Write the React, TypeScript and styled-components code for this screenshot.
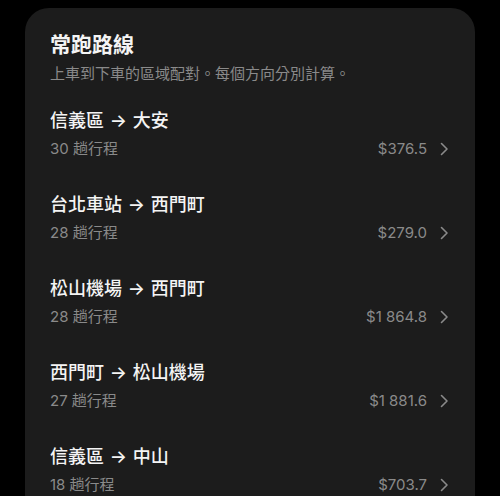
import React from "react";
import styled, { createGlobalStyle } from "styled-components";

const Global = createGlobalStyle`
  html, body { margin: 0; padding: 0; background: #000; }
  body {
    font-family: "Inter", "Noto Sans CJK TC", sans-serif;
    -webkit-font-smoothing: antialiased;
  }
`;

const Page = styled.div`
  width: 500px;
  height: 496px;
  overflow: hidden;
  background: #000;
  padding: 8px 25px 0;
  box-sizing: border-box;
`;

const Card = styled.section`
  background: #1c1c1c;
  border-radius: 24px;
  padding: 23px 26px 0 25px;
  min-height: 600px;
  box-sizing: border-box;
`;

const Title = styled.h2`
  margin: 0;
  font-size: 21px;
  line-height: 28px;
  font-weight: 600;
  color: #f4f4f4;
`;

const Subtitle = styled.p`
  margin: 4px 0 0;
  font-family: "Noto Sans CJK TC", sans-serif;
  font-size: 15px;
  line-height: 20px;
  color: #8a8a8a;
`;

const List = styled.ul`
  list-style: none;
  margin: 0;
  padding: 9px 0 0;
`;

const Row = styled.li`
  padding: 16px 0 17px;
  display: flex;
  flex-direction: column;
  gap: 5px;
`;

const RouteName = styled.div`
  font-size: 18px;
  line-height: 26px;
  font-weight: 500;
  color: #f4f4f4;
  word-spacing: 1px;
`;

const Meta = styled.div`
  display: flex;
  align-items: center;
  justify-content: space-between;
  font-size: 15px;
  line-height: 20px;
  color: #8a8a8a;
`;

const Right = styled.div`
  display: flex;
  align-items: center;
  gap: 13px;
`;

const Chevron = () => (
  <svg width="9" height="14" viewBox="0 0 9 14" fill="none">
    <path d="M1.5 1.5 L7 7 L1.5 12.5" stroke="#8a8a8a" strokeWidth="1.6" strokeLinecap="round" strokeLinejoin="round" />
  </svg>
);

const routes = [
  { from: "信義區", to: "大安", trips: 30, price: "$376.5" },
  { from: "台北車站", to: "西門町", trips: 28, price: "$279.0" },
  { from: "松山機場", to: "西門町", trips: 28, price: "$1\u00a0864.8" },
  { from: "西門町", to: "松山機場", trips: 27, price: "$1\u00a0881.6" },
  { from: "信義區", to: "中山", trips: 18, price: "$703.7" },
];

export default function App() {
  return (
    <>
      <Global />
      <Page lang="zh-Hant">
        <Card>
          <Title>常跑路線</Title>
          <Subtitle>上車到下車的區域配對。每個方向分別計算。</Subtitle>
          <List>
            {routes.map((r, i) => (
              <Row key={i}>
                <RouteName>
                  {r.from} → {r.to}
                </RouteName>
                <Meta>
                  <span>{r.trips} 趟行程</span>
                  <Right>
                    <span>{r.price}</span>
                    <Chevron />
                  </Right>
                </Meta>
              </Row>
            ))}
          </List>
        </Card>
      </Page>
    </>
  );
}
